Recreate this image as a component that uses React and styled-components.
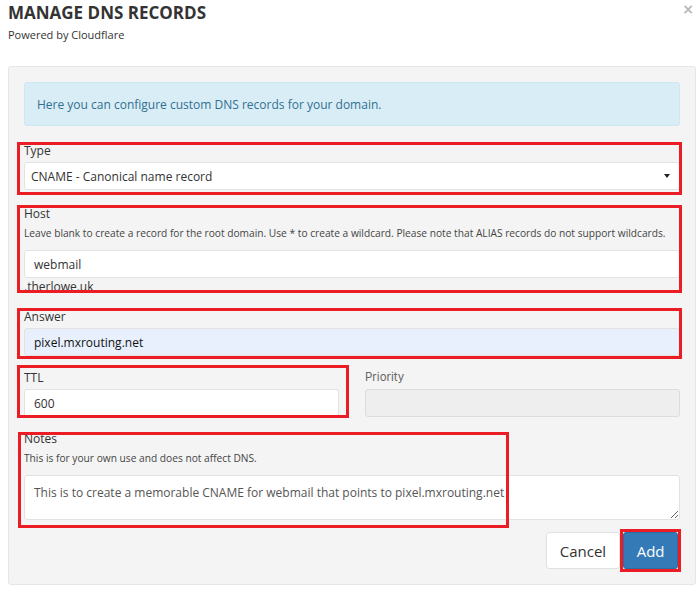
import React from "react";
import styled, { createGlobalStyle } from "styled-components";

const GlobalStyle = createGlobalStyle`
  * { box-sizing: border-box; }
  body {
    margin: 0;
    background: #fff;
    font-family: "Open Sans", "Liberation Sans", sans-serif;
    color: #333;
  }
`;

const Page = styled.div`
  width: 700px;
  padding: 1px 4px 0 8px;
`;

const Header = styled.div`
  display: flex;
  justify-content: space-between;
  align-items: flex-start;
  height: 65px;
`;

const Title = styled.h1`
  margin: 0;
  font-size: 17px;
  line-height: 23px;
  font-weight: 700;
  color: #333;
`;

const Subtitle = styled.div`
  margin-top: 3px;
  font-size: 11px;
  line-height: 15px;
  color: #333;
`;

const Close = styled.span`
  margin: 2px 2px 0 0;
  font-size: 14px;
  line-height: 12px;
  font-weight: 700;
  color: #b8b8b8;
  font-family: "DejaVu Sans", sans-serif;
`;

const Panel = styled.div`
  width: 688px;
  background: #f4f4f4;
  border: 1px solid #e6e6e6;
  border-radius: 3px;
  padding: 15px 15px 15px;
`;

const Alert = styled.div`
  height: 44px;
  line-height: 44px;
  padding: 0 12px;
  margin-bottom: 16px;
  background: #d9edf7;
  border: 1px solid #cfe7f2;
  border-radius: 3px;
  color: #31708f;
  font-size: 12px;
`;

// a form group, with an optional red frame drawn over it
const Group = styled.div`
  position: relative;
  margin-bottom: ${(p) => p.$mb || 0}px;

  ${(p) =>
    p.$box &&
    `
    &::after {
      content: "";
      position: absolute;
      inset: ${p.$box};
      border: 3px solid #ec1c24;
      pointer-events: none;
    }
  `}
`;

const Label = styled.div`
  font-size: ${(p) => (p.$plain ? 11.5 : 12)}px;
  line-height: 17px;
  margin-bottom: 3px;
  color: ${(p) => (p.$plain ? "#666" : "#333")};
  font-family: ${(p) =>
    p.$plain ? `Inter, "Liberation Sans", sans-serif` : "inherit"};
`;

const Help = styled.div`
  font-size: 10.2px;
  line-height: 16px;
  margin: 2px 0 9px;
  color: #444;
  white-space: nowrap;
`;

const Field = styled.input`
  display: block;
  width: 100%;
  height: 28px;
  padding: 0 9px;
  border: 1px solid ${(p) => (p.disabled ? "#dcdcdc" : "#e2e2e2")};
  border-radius: 3px;
  background: ${(p) => (p.$filled ? "#e8f0fe" : p.disabled ? "#eeeeee" : "#fff")};
  font-family: "Open Sans", "Liberation Sans", sans-serif;
  font-size: 12px;
  color: ${(p) => (p.$filled ? "#111" : "#333")};
  outline: none;
`;

const Select = styled.div`
  display: flex;
  align-items: center;
  justify-content: space-between;
  height: 28px;
  padding: 0 9px 0 6px;
  background: #fff;
  border: 1px solid #e2e2e2;
  border-radius: 3px;
  font-size: 12px;
  color: #333;
`;

const Caret = styled.span`
  width: 0;
  height: 0;
  border-left: 3.5px solid transparent;
  border-right: 3.5px solid transparent;
  border-top: 4px solid #222;
`;

const Suffix = styled.div`
  font-size: 12px;
  line-height: 18px;
  color: #333;
`;

const Row = styled.div`
  display: grid;
  grid-template-columns: 1fr 1fr;
  column-gap: 26px;
  margin-bottom: 13px;
`;

const Notes = styled.textarea`
  display: block;
  width: 100%;
  height: 45px;
  padding: 8px 9px;
  border: 1px solid #e2e2e2;
  border-radius: 3px;
  background: #fff;
  font-family: "Open Sans", "Liberation Sans", sans-serif;
  font-size: 12px;
  line-height: 18px;
  color: #555;
  resize: vertical;
  outline: none;
`;

const Actions = styled.div`
  display: flex;
  justify-content: flex-end;
  gap: 3px;
  margin-top: 12px;
  padding-right: 2px;
`;

const Button = styled.button`
  height: 37px;
  padding: 0 ${(p) => (p.$primary ? 12.5 : 13)}px;
  border-radius: 3px;
  border: 1px solid ${(p) => (p.$primary ? "#2e6da4" : "#e0e0e0")};
  background: ${(p) => (p.$primary ? "#337ab7" : "#fff")};
  color: ${(p) => (p.$primary ? "#fff" : "#333")};
  font-family: "Open Sans", "Liberation Sans", sans-serif;
  font-size: 15px;
  cursor: pointer;
`;

const Framed = styled.div`
  position: relative;

  &::after {
    content: "";
    position: absolute;
    inset: -3px;
    border: 3px solid #ec1c24;
    pointer-events: none;
  }
`;

export default function App() {
  return (
    <>
      <GlobalStyle />
      <Page>
        <Header>
          <div>
            <Title>MANAGE DNS RECORDS</Title>
            <Subtitle>Powered by Cloudflare</Subtitle>
          </div>
          <Close>×</Close>
        </Header>

        <Panel>
          <Alert>Here you can configure custom DNS records for your domain.</Alert>

          <Group $mb={15} $box="0 -2px -5px -7px">
            <Label>Type</Label>
            <Select>
              CNAME - Canonical name record
              <Caret />
            </Select>
          </Group>

          <Group $mb={12} $box="0 -2px 3px -7px">
            <Label>Host</Label>
            <Help>
              Leave blank to create a record for the root domain. Use * to create a
              wildcard. Please note that ALIAS records do not support wildcards.
            </Help>
            <Field defaultValue="webmail" readOnly />
            <Suffix>.therlowe.uk</Suffix>
          </Group>

          <Group $mb={13} $box="0 -2px -3px -7px">
            <Label>Answer</Label>
            <Field $filled defaultValue="pixel.mxrouting.net" readOnly />
          </Group>

          <Row>
            <Group $box="-4px -10px -1px -7px">
              <Label>TTL</Label>
              <Field defaultValue="600" readOnly />
            </Group>
            <Group>
              <Label $plain>Priority</Label>
              <Field disabled />
            </Group>
          </Row>

          <Group $box="2px 171px -8px -6px">
            <Label>Notes</Label>
            <Help>This is for your own use and does not affect DNS.</Help>
            <Notes
              readOnly
              defaultValue="This is to create a memorable CNAME for webmail that points to pixel.mxrouting.net"
            />
          </Group>

          <Actions>
            <Button>Cancel</Button>
            <Framed>
              <Button $primary>Add</Button>
            </Framed>
          </Actions>
        </Panel>
      </Page>
    </>
  );
}
